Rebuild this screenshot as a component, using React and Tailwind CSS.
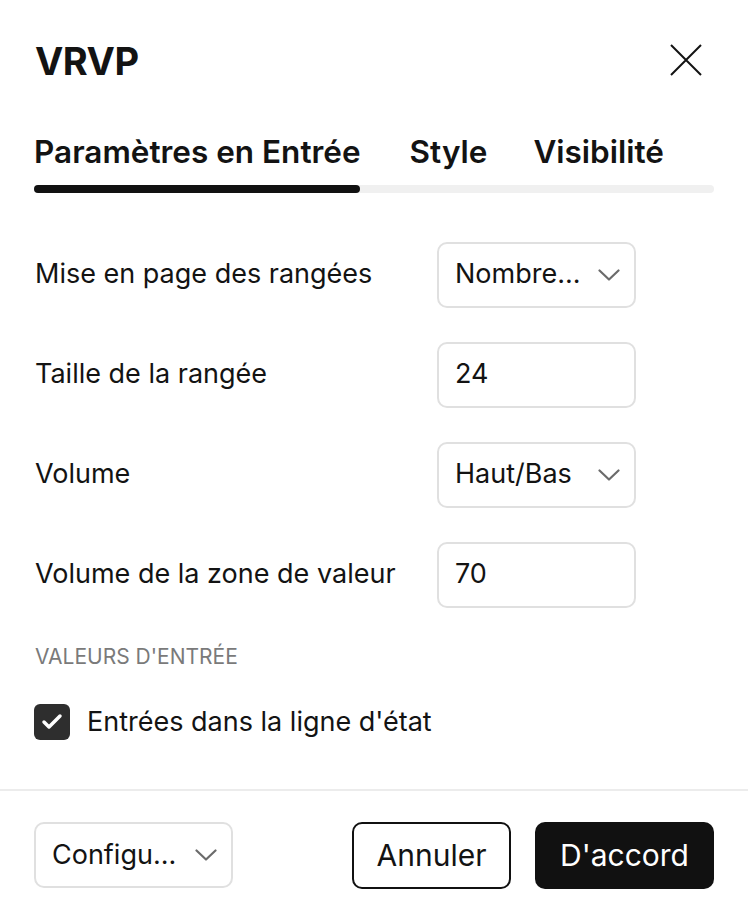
import { Check } from 'lucide-react';

const ROWS = [
  { label: 'Mise en page des rangées', value: 'Nombre...', select: true },
  { label: 'Taille de la rangée', value: '24' },
  { label: 'Volume', value: 'Haut/Bas', select: true },
  { label: 'Volume de la zone de valeur', value: '70' },
];

function Chevron() {
  return (
    <svg width="22" height="12" viewBox="0 0 22 12" fill="none" className="text-[#6b6b6b]">
      <path d="M1.5 1.5 11 10.5 20.5 1.5" stroke="currentColor" strokeWidth="2.2" strokeLinecap="round" strokeLinejoin="round" />
    </svg>
  );
}

function Field({ value, select, className = '' }) {
  return (
    <div
      className={`flex items-center justify-between h-[66px] border-2 border-[#e0e0e0] rounded-[10px] pl-[16px] pr-[14px] text-[27px] text-[#131313] ${className}`}
    >
      <span>{value}</span>
      {select && <Chevron />}
    </div>
  );
}

export default function App() {
  return (
    <div className="w-[748px] h-[918px] bg-white flex flex-col font-['Inter',sans-serif] text-[#131313]">
      {/* Header */}
      <div className="flex items-center justify-between pl-[35px] pr-[46px] pt-[33px] h-[90px]">
        <h1 className="text-[38px] font-bold tracking-[-0.5px]">VRVP</h1>
        <svg width="32" height="32" viewBox="0 0 32 32" fill="none" className="text-[#131313] mt-[-3px]">
          <path d="M1 1 31 31M31 1 1 31" stroke="currentColor" strokeWidth="2" />
        </svg>
      </div>

      {/* Tabs */}
      <div className="px-[34px] mt-[46px]">
        <div className="flex text-[31.5px] font-semibold leading-none">
          <span className="pb-[17px]">Paramètres en Entrée</span>
          <span className="pb-[17px] ml-[49px]">Style</span>
          <span className="pb-[17px] ml-[46px]">Visibilité</span>
        </div>
        <div className="relative h-2 rounded-full bg-[#f0f0f0]">
          <div className="absolute left-0 top-0 h-2 w-[326px] rounded-full bg-[#111]" />
        </div>
      </div>

      {/* Rows */}
      <div className="flex flex-col gap-[34px] px-[35px] mt-[49px]">
        {ROWS.map(r => (
          <div key={r.label} className="flex items-center justify-between pr-[77px]">
            <span className="text-[27px]">{r.label}</span>
            <Field value={r.value} select={r.select} className="w-[199px]" />
          </div>
        ))}
      </div>

      {/* Section */}
      <div className="px-[35px] mt-[33px] text-[21px] text-[#7a7a7a] uppercase">
        Valeurs d'entrée
      </div>
      <div className="flex items-center gap-[17px] px-[34px] mt-[30px]">
        <div className="w-9 h-9 rounded-[6px] bg-[#2e2e2e] flex items-center justify-center">
          <Check size={24} strokeWidth={3.5} className="text-white" />
        </div>
        <span className="text-[27px]">Entrées dans la ligne d'état</span>
      </div>

      {/* Footer */}
      <div className="mt-[46px] border-t-2 border-[#ececec] flex items-center justify-between px-[34px] pt-[31px]">
        <Field value="Configu..." select className="w-[199px]" />
        <div className="flex gap-6">
          <button className="h-[67px] w-[159px] rounded-[10px] border-2 border-[#111] text-[30px]">Annuler</button>
          <button className="h-[67px] w-[179px] rounded-[10px] bg-[#111] text-white text-[30px]">D'accord</button>
        </div>
      </div>
    </div>
  );
}
